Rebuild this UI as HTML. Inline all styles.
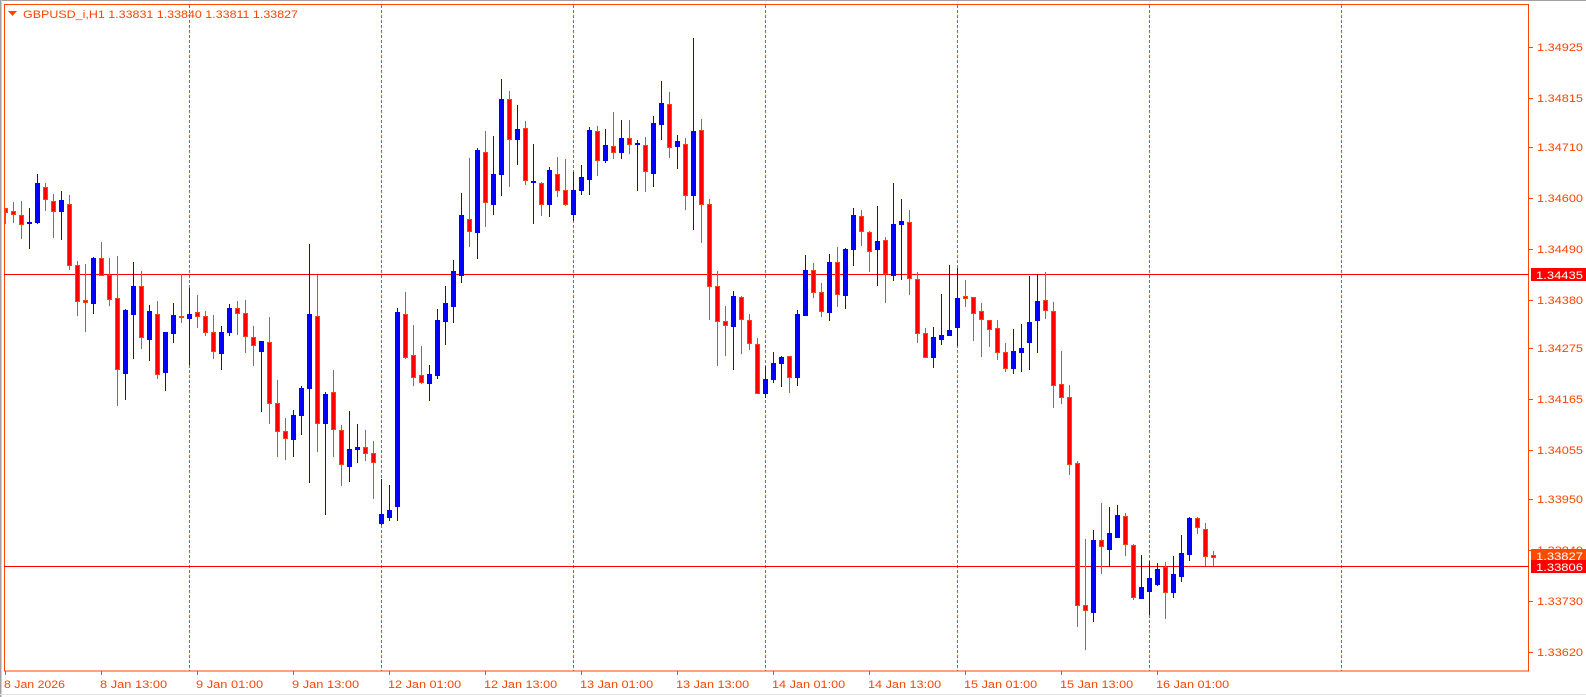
<!DOCTYPE html>
<html><head><meta charset="utf-8"><style>
html,body{margin:0;padding:0;background:#fff;}
svg{display:block;}
text{font-family:"Liberation Sans",sans-serif;font-size:11px;}
</style></head><body>
<svg id="s" width="1586" height="697" xmlns="http://www.w3.org/2000/svg">
<rect x="0" y="0" width="1586" height="697" fill="#fff"/>
<rect x="0" y="0" width="1586" height="1" fill="#a0a0a0"/>
<rect x="0" y="0" width="1" height="697" fill="#a0a0a0"/>
<rect x="1" y="0" width="1" height="697" fill="#d0d0d0"/>
<rect x="0" y="694" width="1586" height="1" fill="#e3e3e3"/>
<g id="grid"></g>
<rect x="4.5" y="4.5" width="1524" height="666.5" fill="none" stroke="#ff4500" stroke-width="1"/>
<rect x="4" y="274" width="1525" height="1" fill="#ff0000"/>
<rect x="4" y="566" width="1525" height="1" fill="#ff0000"/>
<g id="c"></g>
<g id="ax"></g>
<polygon points="8,11 17,11 12.5,16" fill="#ff4500"/>
<text x="23" y="18" fill="#ff4500" textLength="275" lengthAdjust="spacingAndGlyphs">GBPUSD_i,H1  1.33831 1.33840 1.33811 1.33827</text>
<rect x="1531" y="549" width="55" height="13" fill="#ff4a00"/>
<text x="1536" y="560" fill="#fff" textLength="47" lengthAdjust="spacingAndGlyphs">1.33827</text>
<rect x="1531" y="560" width="55" height="13" fill="#ff0000"/>
<text x="1536" y="571" fill="#fff" textLength="47" lengthAdjust="spacingAndGlyphs">1.33806</text>
<rect x="1531" y="268" width="55" height="13" fill="#ff0000"/>
<text x="1536" y="279" fill="#fff" textLength="47" lengthAdjust="spacingAndGlyphs">1.34435</text>
</svg>
<script>
var NS="http://www.w3.org/2000/svg";
function el(p,t,a,txt){var e=document.createElementNS(NS,t);for(var k in a)e.setAttribute(k,a[k]);if(txt)e.textContent=txt;p.appendChild(e);return e;}
var g=document.getElementById('grid');
[189,381,573,765,957,1149,1341].forEach(function(x){el(g,'line',{x1:x+0.5,y1:5,x2:x+0.5,y2:671,stroke:'#ff4500','stroke-width':1,'stroke-dasharray':'3,2'});});
var ax=document.getElementById('ax');
var prices=["1.34925","1.34815","1.34710","1.34600","1.34490","1.34380","1.34275","1.34165","1.34055","1.33950","1.33840","1.33730","1.33620"];
prices.forEach(function(p){var y=Math.round(652-(parseFloat(p)-1.3362)*46360);el(ax,'rect',{x:1529,y:y,width:4,height:1,fill:'#ff4500'});el(ax,'text',{x:1537,y:y+4,fill:'#ff4500',textLength:46,lengthAdjust:'spacingAndGlyphs'},p);});
var labs=["8 Jan 2026","8 Jan 13:00","9 Jan 01:00","9 Jan 13:00","12 Jan 01:00","12 Jan 13:00","13 Jan 01:00","13 Jan 13:00","14 Jan 01:00","14 Jan 13:00","15 Jan 01:00","15 Jan 13:00","16 Jan 01:00"];
labs.forEach(function(l,i){var x=5+96*i;el(ax,'rect',{x:x,y:671,width:1,height:4,fill:'#ff4500'});el(ax,'text',{x:x-1,y:688,fill:'#ff4500',textLength:l.length*6.1,lengthAdjust:'spacingAndGlyphs'},l);});
var d=[[208,208,212,223,0],[202,211,214,222,0],[201,215,224,238,0],[208,222,223,248,1],[174,183,222,223,1],[183,187,199,210,0],[194,201,211,237,0],[191,200,211,239,1],[195,204,265,269,0],[261,265,301,315,0],[264,300,302,331,0],[257,258,303,313,1],[242,258,275,275,0],[258,275,299,305,0],[256,298,369,405,0],[309,310,373,399,1],[262,286,314,358,1],[271,286,337,348,0],[305,311,339,360,1],[301,314,374,378,0],[332,332,372,390,1],[303,315,333,342,1],[274,316,317,322,0],[288,314,318,364,1],[295,312,316,327,0],[311,316,332,335,0],[315,332,351,358,0],[326,332,353,369,1],[304,308,332,335,1],[301,308,313,334,0],[300,313,336,352,0],[326,337,345,365,0],[341,341,351,411,1],[317,342,403,423,0],[380,403,431,456,0],[418,431,438,459,0],[410,415,439,456,1],[386,388,415,434,1],[244,314,388,482,1],[275,316,423,451,0],[392,394,423,514,1],[370,392,429,456,0],[425,430,464,485,0],[411,449,466,481,1],[424,447,449,462,1],[430,447,453,460,0],[441,453,462,498,0],[479,514,523,524,1],[485,510,517,520,1],[308,312,506,520,1],[292,314,357,358,0],[325,355,377,385,0],[346,375,382,383,0],[365,374,383,400,1],[309,320,375,378,1],[286,303,321,344,1],[260,271,306,322,1],[193,215,275,282,1],[158,219,231,246,0],[148,150,232,258,1],[131,152,202,226,0],[136,174,204,214,1],[79,99,174,195,1],[91,99,139,186,0],[105,129,139,164,1],[121,128,180,184,0],[144,181,182,223,1],[182,183,204,215,0],[167,170,204,216,1],[157,174,190,196,0],[159,190,204,205,0],[172,190,214,220,1],[165,177,190,194,1],[127,130,179,194,1],[126,131,160,175,0],[129,145,160,162,1],[112,146,152,158,0],[120,138,152,158,1],[120,138,144,153,0],[140,143,144,190,1],[137,145,171,191,0],[116,123,173,186,1],[81,103,124,139,1],[92,104,147,157,0],[135,141,146,168,1],[138,144,195,209,0],[38,131,195,229,1],[119,130,204,242,0],[199,204,286,319,0],[271,286,321,365,0],[306,321,325,355,0],[291,296,326,369,1],[296,297,319,353,0],[314,320,343,349,0],[338,344,393,393,0],[366,379,393,397,1],[352,363,379,382,1],[356,357,363,386,1],[356,356,377,392,0],[310,314,377,385,1],[255,270,315,315,1],[263,270,292,297,0],[283,292,311,316,0],[254,262,312,320,1],[247,262,294,306,0],[248,249,295,308,1],[208,215,249,265,1],[210,216,231,245,0],[231,232,251,271,0],[206,241,249,285,1],[237,240,273,302,0],[183,224,275,280,1],[199,221,224,279,1],[210,222,278,294,0],[272,279,333,342,0],[328,333,357,357,0],[327,337,357,367,1],[294,335,339,344,1],[265,330,335,335,1],[268,298,327,345,1],[280,296,298,306,0],[297,297,313,340,0],[303,311,319,356,0],[320,320,329,346,0],[320,328,352,359,0],[343,352,368,371,0],[329,351,368,373,1],[324,348,352,371,1],[276,322,342,369,1],[274,301,320,352,1],[272,300,310,318,0],[302,311,385,407,0],[351,384,397,403,0],[385,397,464,474,0],[461,463,605,626,0],[539,605,610,649,0],[530,540,612,621,1],[503,540,546,573,0],[507,533,549,566,1],[505,515,537,537,1],[513,516,544,555,0],[544,545,597,599,0],[555,587,598,598,1],[561,578,591,614,1],[563,569,584,585,1],[562,567,592,618,0],[556,574,592,597,1],[535,553,576,581,1],[517,518,554,560,1],[517,518,527,533,0],[523,529,556,565,0],[551,555,557,565,0]];
var c=document.getElementById('c');
d.forEach(function(v,k){var x=5+8*k;var bull=v[4]==1;var wc=bull?'#0000ff':'#ff4500';
el(c,'rect',{x:x,y:v[0],width:1,height:Math.max(1,v[3]-v[0]+1),fill:wc});
var h=Math.max(1,v[2]-v[1]+1);var bx=Math.max(5,x-2);var bw=x-2<5?5-(5-(x-2)):5;if(x-2<5){bw=x+3-5;}
if(bull){el(c,'rect',{x:bx,y:v[1],width:bw,height:h,fill:'#0000ff'});}
else{el(c,'rect',{x:bx,y:v[1],width:bw,height:h,fill:'#ff4500'});if(h>2&&bw>2)el(c,'rect',{x:bx+1,y:v[1]+1,width:bw-2,height:h-2,fill:'#ff0000'});}
});
</script>
</body></html>
